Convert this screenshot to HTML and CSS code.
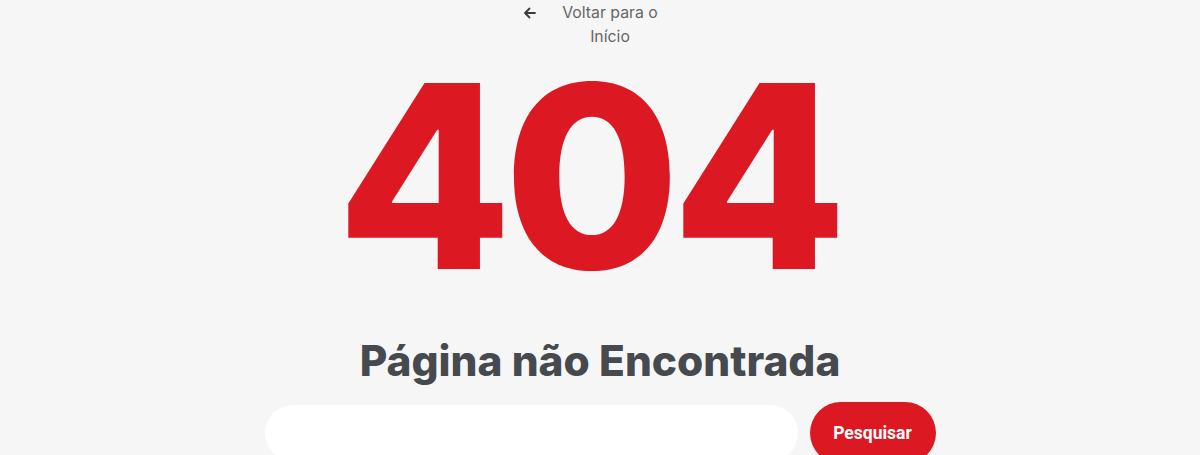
FILE: index.html
```html
<!DOCTYPE html>
<html lang="pt">
<head>
<meta charset="utf-8">
<link rel="stylesheet" href="styles.css">
</head>
<body>
<main class="page">
  <a class="back" href="#">
    <svg class="back-icon" width="16" height="16" viewBox="0 0 16 16" fill="none" stroke="#3c3c3c" stroke-width="1.8" stroke-linecap="round" stroke-linejoin="round"><path d="M13 8H3.5M7.5 3.5L3 8l4.5 4.5"/></svg>
    <span class="back-text">Voltar para o Início</span>
  </a>
  <h1 class="code">404</h1>
  <h2 class="title">Página não Encontrada</h2>
  <form class="search">
    <input class="search-input" type="text" aria-label="Pesquisar">
    <button class="search-btn" type="button">Pesquisar</button>
  </form>
</main>
</body>
</html>
```
FILE: styles.css
```css
html, body {
  margin: 0;
  padding: 0;
  background: #f6f6f6;
  font-family: Inter, "Noto Sans", sans-serif;
  overflow: hidden;
}
.page {
  display: flex;
  flex-direction: column;
  align-items: center;
}
.back {
  display: flex;
  align-items: flex-start;
  gap: 16px;
  text-decoration: none;
  color: #666;
  font-size: 15.8px;
  line-height: 24px;
  margin-right: 12px;
  padding-top: 1px;
}
.back-icon {
  margin-top: 4px;
}
.back-text {
  display: block;
  width: 112px;
  text-align: center;
}
.code {
  margin: 0;
  margin-top: 28px;
  margin-right: 16px;
  font-size: 255px;
  font-weight: 800;
  color: #dc1823;
  line-height: 200px;
  letter-spacing: -8.5px;
  text-indent: -8.5px;
}
.title {
  margin: 0;
  margin-top: 59px;
  font-size: 42.4px;
  font-weight: 800;
  color: #464a4f;
  line-height: 50px;
}
.search {
  display: flex;
  gap: 12px;
  margin-top: 16px;
  align-items: flex-start;
}
.search-input {
  width: 533px;
  height: 56px;
  border: none;
  border-radius: 28px;
  background: #fff;
  padding: 0 20px;
  box-sizing: border-box;
  margin-top: 3px;
}
.search-btn {
  width: 126px;
  height: 62px;
  border: none;
  border-radius: 31px;
  background: #dc1823;
  color: #fff;
  font-family: Roboto, sans-serif;
  font-weight: 700;
  font-size: 17.5px;
  letter-spacing: 0;
}
```
